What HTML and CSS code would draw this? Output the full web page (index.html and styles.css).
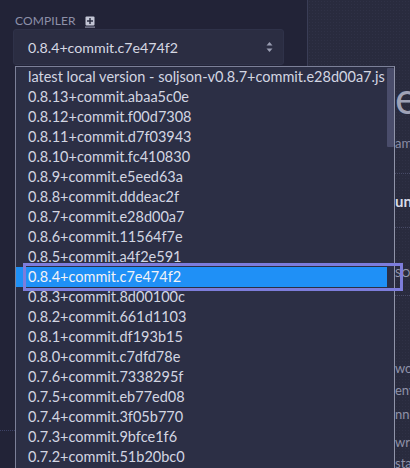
FILE: index.html
```html
<!DOCTYPE html>
<html>
<head>
<meta charset="utf-8">
<link rel="stylesheet" href="styles.css">
</head>
<body>
<div class="app">
  <aside class="sidebar">
    <div class="label-row">
      <span class="label">COMPILER</span>
      <svg class="add-icon" width="10" height="12" viewBox="0 0 10 12">
        <rect x="0.5" y="0.5" width="9" height="9" rx="1" fill="#c3c6d6"/>
        <rect x="4.3" y="2" width="1.4" height="6" fill="#23253a"/>
        <rect x="2" y="4.3" width="6" height="1.4" fill="#23253a"/>
        <rect x="0" y="10.6" width="10" height="1" fill="#9da0b6"/>
      </svg>
    </div>
    <div class="select">
      <span class="select-value">0.8.4+commit.c7e474f2</span>
      <svg class="arrows" width="7" height="12" viewBox="0 0 7 12">
        <path d="M3.5 1 L6.5 4.5 H0.5 Z" fill="#9a9db2"/>
        <path d="M3.5 11 L6.5 7.5 H0.5 Z" fill="#9a9db2"/>
      </svg>
    </div>
    <div class="section-sep"></div>
  </aside>
  <main class="main">
    <div class="big">editor</div>
    <div class="sub">amples</div>
    <div class="rule first"></div>
    <div class="bold">unit</div>
    <div class="rule"></div>
    <div class="caps">SOLIDITY</div>
    <div class="rule"></div>
    <div class="link l1">workspace</div>
    <div class="link l2">environment</div>
    <div class="link l3">nnect</div>
    <div class="link l4">wrap</div>
    <div class="link l5">start</div>
  </main>
</div>

<div class="dropdown">
  <div class="options">
    <div class="opt">latest local version - soljson-v0.8.7+commit.e28d00a7.js</div>
    <div class="opt">0.8.13+commit.abaa5c0e</div>
    <div class="opt">0.8.12+commit.f00d7308</div>
    <div class="opt">0.8.11+commit.d7f03943</div>
    <div class="opt">0.8.10+commit.fc410830</div>
    <div class="opt">0.8.9+commit.e5eed63a</div>
    <div class="opt">0.8.8+commit.dddeac2f</div>
    <div class="opt">0.8.7+commit.e28d00a7</div>
    <div class="opt">0.8.6+commit.11564f7e</div>
    <div class="opt">0.8.5+commit.a4f2e591</div>
    <div class="opt selected">0.8.4+commit.c7e474f2</div>
    <div class="opt">0.8.3+commit.8d00100c</div>
    <div class="opt">0.8.2+commit.661d1103</div>
    <div class="opt">0.8.1+commit.df193b15</div>
    <div class="opt">0.8.0+commit.c7dfd78e</div>
    <div class="opt">0.7.6+commit.7338295f</div>
    <div class="opt">0.7.5+commit.eb77ed08</div>
    <div class="opt">0.7.4+commit.3f05b770</div>
    <div class="opt">0.7.3+commit.9bfce1f6</div>
    <div class="opt">0.7.2+commit.51b20bc0</div>
  </div>
  <div class="scrollbar"><div class="thumb"></div></div>
</div>
<div class="focus-ring"></div>
</body>
</html>
```

FILE: styles.css
```css
html, body {
  margin: 0;
  padding: 0;
  width: 410px;
  height: 468px;
  overflow: hidden;
  background: #222337;
  font-family: Lato, "Noto Sans", sans-serif;
}

.app {
  display: flex;
  height: 468px;
}

.sidebar {
  width: 308px;
  flex: none;
  background: #222337;
  border-right: 1px solid #3a3d56;
  padding: 14px 0 0 13px;
  box-sizing: border-box;
  display: flex;
  flex-direction: column;
}

.label-row {
  display: flex;
  align-items: center;
  gap: 9px;
  height: 14px;
  padding-left: 2px;
}

.label {
  font-size: 12px;
  line-height: 14px;
  color: #8d90a8;
  letter-spacing: 0.1px;
}

.add-icon {
  display: block;
  margin-top: 2px;
}

.select {
  margin-top: 1px;
  width: 271px;
  height: 36px;
  box-sizing: border-box;
  background: #2b2d42;
  border: 1px solid #2f3249;
  border-radius: 3px;
  display: flex;
  align-items: center;
  justify-content: space-between;
  padding: 0 10px 0 14px;
}

.select-value {
  font-size: 14.2px;
  color: #d6d8e3;
  padding-top: 1px;
}

.arrows {
  display: block;
}

.section-sep {
  margin-top: 365px;
  margin-left: -13px;
  width: 15px;
  border-top: 1px dotted #3d4266;
}

.main {
  flex: 1;
  background-color: #292b3e;
  background-image: radial-gradient(#2f3146 0.6px, transparent 0.8px);
  background-size: 3px 3px;
  padding-left: 87px;
  white-space: nowrap;
  overflow: hidden;
  display: flex;
  flex-direction: column;
}

.big {
  margin-top: 72px;
  font-size: 44px;
  line-height: 50px;
  color: #9fa2b6;
}

.sub {
  margin-top: 13px;
  font-size: 13px;
  line-height: 16px;
  color: #8b8ea6;
}

.rule {
  margin-left: -3px;
  border-top: 1px dotted #474a66;
}

.rule.first {
  margin-top: 22px;
}

.bold {
  margin-top: 18px;
  font-size: 15px;
  line-height: 18px;
  font-weight: 700;
  color: #d9dbe6;
}

.bold + .rule {
  margin-top: 17px;
}

.caps {
  margin-top: 38px;
  font-size: 11px;
  line-height: 14px;
  color: #9598ae;
  letter-spacing: 0.5px;
}

.caps + .rule {
  margin-top: 15px;
}

.link {
  font-size: 13px;
  line-height: 16px;
  color: #8f92a8;
}

.l1 { margin-top: 64px; }
.l2 { margin-top: 6px; }
.l3 { margin-top: 8px; }
.l4 { margin-top: 12px; }
.l5 { margin-top: 5px; }

.dropdown {
  position: absolute;
  left: 15px;
  top: 66px;
  width: 380px;
  height: 420px;
  box-sizing: border-box;
  background: #2c2f45;
  border: 1px solid #7c8098;
  border-right-color: #9094a9;
  display: flex;
}

.options {
  flex: 1;
  min-width: 0;
  overflow: hidden;
}

.opt {
  height: 20px;
  line-height: 20px;
  padding-left: 12px;
  font-size: 14.5px;
  color: #d3d6e2;
  white-space: nowrap;
}

.opt.selected {
  background: #1f90f6;
  color: #f2f3f8;
}

.scrollbar {
  width: 7px;
  flex: none;
}

.thumb {
  margin-top: 1px;
  height: 79px;
  background: #4a4d6b;
  border-radius: 1px;
}

.focus-ring {
  position: absolute;
  left: 23px;
  top: 263px;
  width: 380px;
  height: 28px;
  box-sizing: border-box;
  border: 3px solid #7d7ddc;
}
```
